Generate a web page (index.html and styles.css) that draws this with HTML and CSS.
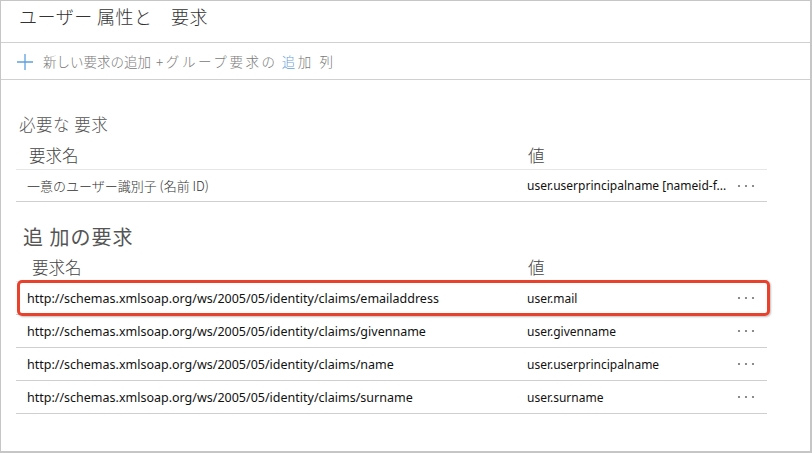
FILE: index.html
```html
<!DOCTYPE html>
<html lang="ja">
<head>
<meta charset="utf-8">
<link rel="stylesheet" href="styles.css">
</head>
<body>
<div class="frame">
  <header class="page-header">
    <h1 class="title">ユーザー 属性と　要求</h1>
  </header>
  <div class="toolbar">
    <svg class="plus" width="18" height="18" viewBox="0 0 18 18"><path d="M9 1V17M1 9H17" stroke="#5ea0e0" stroke-width="1.3" fill="none"/></svg>
    <span class="tool-text">新しい要求の追加<span class="spaced">+グループ要求の<span class="hl">追</span>加 列</span></span>
  </div>

  <section class="section required">
    <h2 class="section-title small">必要な 要求</h2>
    <div class="table">
      <div class="thead">
        <div class="c-name">要求名</div>
        <div class="c-value">値</div>
      </div>
      <div class="row">
        <div class="c-name jp">一意のユーザー識別子 (名前 ID)</div>
        <div class="c-value">user.userprincipalname [nameid-f...</div>
        <div class="c-more"><svg width="18" height="4" viewBox="0 0 18 4"><circle cx="2" cy="2" r="1.1"/><circle cx="9" cy="2" r="1.1"/><circle cx="16" cy="2" r="1.1"/></svg></div>
      </div>
    </div>
  </section>

  <section class="section additional">
    <h2 class="section-title large">追 加の要求</h2>
    <div class="table">
      <div class="thead">
        <div class="c-name">要求名</div>
        <div class="c-value">値</div>
      </div>
      <div class="row highlighted">
        <div class="c-name">http://schemas.xmlsoap.org/ws/2005/05/identity/claims/emailaddress</div>
        <div class="c-value">user.mail</div>
        <div class="c-more"><svg width="18" height="4" viewBox="0 0 18 4"><circle cx="2" cy="2" r="1.1"/><circle cx="9" cy="2" r="1.1"/><circle cx="16" cy="2" r="1.1"/></svg></div>
        <div class="mark"></div>
      </div>
      <div class="row">
        <div class="c-name">http://schemas.xmlsoap.org/ws/2005/05/identity/claims/givenname</div>
        <div class="c-value">user.givenname</div>
        <div class="c-more"><svg width="18" height="4" viewBox="0 0 18 4"><circle cx="2" cy="2" r="1.1"/><circle cx="9" cy="2" r="1.1"/><circle cx="16" cy="2" r="1.1"/></svg></div>
      </div>
      <div class="row">
        <div class="c-name">http://schemas.xmlsoap.org/ws/2005/05/identity/claims/name</div>
        <div class="c-value">user.userprincipalname</div>
        <div class="c-more"><svg width="18" height="4" viewBox="0 0 18 4"><circle cx="2" cy="2" r="1.1"/><circle cx="9" cy="2" r="1.1"/><circle cx="16" cy="2" r="1.1"/></svg></div>
      </div>
      <div class="row">
        <div class="c-name">http://schemas.xmlsoap.org/ws/2005/05/identity/claims/surname</div>
        <div class="c-value">user.surname</div>
        <div class="c-more"><svg width="18" height="4" viewBox="0 0 18 4"><circle cx="2" cy="2" r="1.1"/><circle cx="9" cy="2" r="1.1"/><circle cx="16" cy="2" r="1.1"/></svg></div>
      </div>
    </div>
  </section>
</div>
</body>
</html>
```

FILE: styles.css
```css
* { box-sizing: border-box; }
html, body { margin: 0; padding: 0; background: #fff; }
body {
  font-family: "Noto Sans", "Noto Sans CJK JP", sans-serif;
  color: #1b1b1b;
}
.frame {
  width: 812px;
  height: 453px;
  border: 1px solid #c6c6c6;
  border-right-width: 2px;
  border-bottom-width: 2px;
  overflow: hidden;
}
.page-header {
  height: 42px;
  border-bottom: 1px solid #d0d0d0;
  padding-left: 18px;
}
.title {
  margin: 0;
  font-family: "Noto Sans CJK JP", sans-serif;
  font-weight: 300;
  font-size: 18px;
  line-height: 30px;
  color: #333;
  letter-spacing: 0.5px;
}
.toolbar {
  height: 37px;
  border-bottom: 1px solid #d0d0d0;
  display: flex;
  align-items: center;
  padding-left: 15px;
  gap: 9px;
}
.plus { flex: none; margin-top: 1px; }
.tool-text {
  font-family: "Noto Sans CJK JP", sans-serif;
  font-weight: 300;
  font-size: 13.5px;
  color: #7a7a7a;
  white-space: nowrap;
}
.spaced { letter-spacing: 2.6px; margin-left: 5px; }
.hl { color: #6a9fd6; margin-left: 4px; }
.section-title {
  margin: 0;
  font-family: "Noto Sans CJK JP", sans-serif;
  font-weight: 300;
  color: #555;
}
.section-title.small {
  font-size: 16.5px;
  line-height: 24px;
  margin-top: 32px;
  padding-left: 18px;
  letter-spacing: 0.5px;
}
.section-title.large {
  font-size: 20px;
  line-height: 28px;
  margin-top: 21px;
  padding-left: 22px;
  letter-spacing: 1px;
  font-weight: 400;
}
.table {
  margin-left: 15px;
  width: 751px;
}
.thead {
  display: grid;
  grid-template-columns: 511px 1fr;
  height: 34px;
  align-items: end;
  padding-bottom: 2px;
  border-bottom: 1px solid #e6e6e6;
  font-family: "Noto Sans CJK JP", sans-serif;
  font-weight: 300;
  font-size: 16.5px;
  color: #444;
}
.required .thead .c-name { padding-left: 13px; }
.additional .thead { height: 31px; }
.additional .thead .c-name { padding-left: 16px; }
.thead .c-value { padding-left: 1px; }
.row {
  position: relative;
  display: grid;
  grid-template-columns: 511px 1fr 40px;
  align-items: center;
  height: 32px;
  border-bottom: 1px solid #cfcfcf;
  font-size: 12.5px;
  color: #111;
}
.additional .row { height: 33px; }
.row .c-name { padding-left: 11px; white-space: nowrap; }
.row .c-name.jp {
  font-family: "Noto Sans CJK JP", sans-serif;
  font-weight: 300;
  font-size: 13px;
  color: #333;
}
.row .c-value { font-size: 12px; }
.c-more svg { fill: #707070; display: block; margin-left: 10px; }
.mark {
  position: absolute;
  left: 1px;
  right: -3px;
  top: -2px;
  bottom: -2px;
  border: 3px solid #e8412c;
  border-radius: 5px;
  box-shadow: 1px 1px 2px rgba(0,0,0,0.25);
  pointer-events: none;
}
```
